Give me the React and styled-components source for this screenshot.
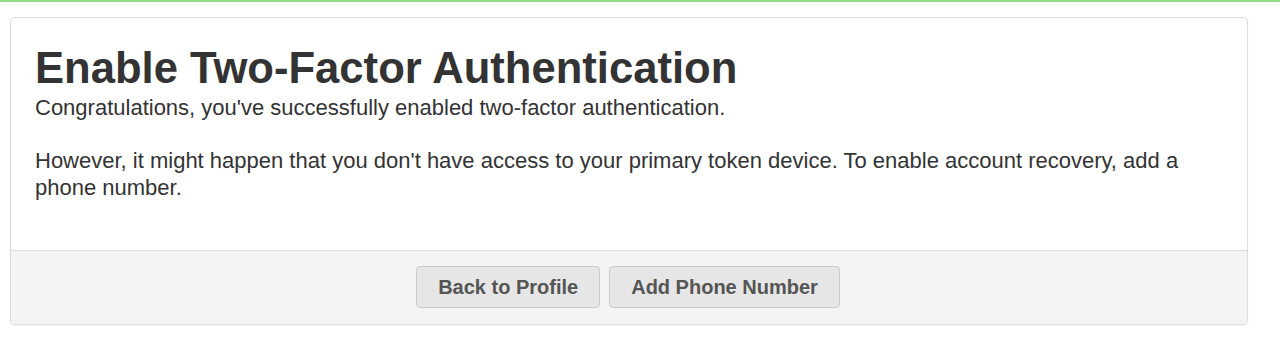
import React from "react";
import styled, { createGlobalStyle } from "styled-components";

const Global = createGlobalStyle`
  html, body { margin: 0; padding: 0; background: #fff; }
  body { font-family: "Liberation Sans", Arial, Helvetica, sans-serif; color: #333; }
`;

const TopBar = styled.div`
  height: 2px;
  background: #94dc8b;
`;

const Page = styled.div`
  padding: 15px 32px 20px 10px;
`;

const Card = styled.section`
  border: 1px solid #dcdcdc;
  border-radius: 5px;
  background: #fff;
  box-shadow: 0 1px 2px rgba(0, 0, 0, 0.06);
  overflow: hidden;
`;

const Body = styled.div`
  padding: 24px 24px 49px 24px;
`;

const Title = styled.h1`
  margin: 0;
  font-size: 43.6px;
  line-height: 52px;
  font-weight: 700;
  color: #333;
`;

const Text = styled.p`
  margin: 0 0 ${(p) => (p.$last ? "0" : "26px")} 0;
  font-size: 22px;
  line-height: 27px;
  color: #333;
`;

const Footer = styled.div`
  display: flex;
  justify-content: center;
  gap: 9px;
  padding: 15px 2px 16px 0;
  background: #f4f4f4;
  border-top: 1px solid #dcdcdc;
`;

const Button = styled.button`
  height: 42px;
  padding: 0 21px;
  font-family: inherit;
  font-size: 20px;
  font-weight: 700;
  color: #555;
  background: #e6e6e6;
  border: 1px solid #cbcbcb;
  border-radius: 4px;
  cursor: pointer;
`;

export default function App() {
  return (
    <>
      <Global />
      <TopBar />
      <Page>
        <Card>
          <Body>
            <Title>Enable Two-Factor Authentication</Title>
            <Text>Congratulations, you've successfully enabled two-factor authentication.</Text>
            <Text $last>
              However, it might happen that you don't have access to your primary token device. To enable account recovery, add a phone number.
            </Text>
          </Body>
          <Footer>
            <Button>Back to Profile</Button>
            <Button>Add Phone Number</Button>
          </Footer>
        </Card>
      </Page>
    </>
  );
}
